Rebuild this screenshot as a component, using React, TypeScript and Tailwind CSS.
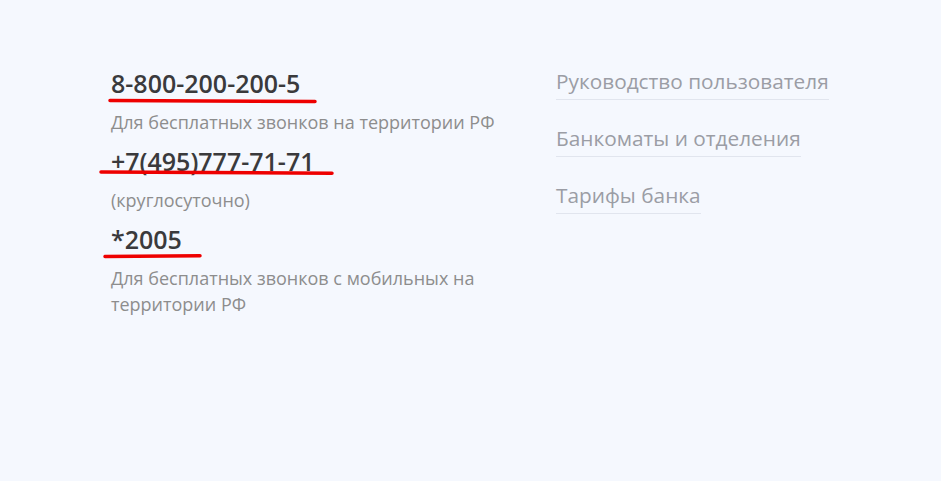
import React from "react";

function Stroke({ x1, y1, x2, y2, left, top, w, h }: { x1: number; y1: number; x2: number; y2: number; left: number; top: number; w: number; h: number }) {
  return (
    <svg className="absolute pointer-events-none" style={{ left, top }} width={w} height={h} viewBox={`0 0 ${w} ${h}`}>
      <line x1={x1} y1={y1} x2={x2} y2={y2} stroke="#ee0000" strokeWidth={3.5} strokeLinecap="round" />
    </svg>
  );
}

export default function App() {
  const font = { fontFamily: '"Open Sans", "Noto Sans", sans-serif' };
  return (
    <div className="w-[941px] h-[481px] bg-[#f5f8fe] overflow-hidden" style={font}>
      <div className="flex pt-[67px] pl-[111px]">
        <div className="w-[445px] flex flex-col">
          <div className="relative text-[25px] leading-[32px] font-semibold text-[#3a3a3c]">
            8-800-200-200-5
            <Stroke left={-4} top={28} w={216} h={12} x1={3} y1={5.5} x2={208} y2={6.5} />
          </div>
          <div className="mt-[10px] text-[18px] leading-[26px] text-[#8d8d8d]">
            Для бесплатных звонков на территории РФ
          </div>
          <div className="relative mt-[10px] text-[25px] leading-[32px] font-semibold text-[#3a3a3c]">
            +7(495)777-71-71
            <Stroke left={-13} top={22} w={240} h={12} x1={3} y1={5} x2={234} y2={6.2} />
          </div>
          <div className="mt-[10px] text-[18px] leading-[26px] text-[#8d8d8d]">(круглосуточно)</div>
          <div className="relative mt-[10px] text-[25px] leading-[32px] font-semibold text-[#3a3a3c]">
            *2005
            <Stroke left={-9} top={27} w={105} h={12} x1={3} y1={6.5} x2={98} y2={5.8} />
          </div>
          <div className="mt-[10px] w-[400px] text-[18px] leading-[26px] text-[#8d8d8d]">
            Для бесплатных звонков с мобильных на территории РФ
          </div>
        </div>
        <div className="flex flex-col items-start pt-[1px]">
          <div className="text-[20.8px] leading-[26px] text-[#9b9da5] pb-[5px] border-b border-[#e1e5ee]">
            Руководство пользователя
          </div>
          <div className="mt-[25px] text-[20.8px] leading-[26px] text-[#9b9da5] pb-[5px] border-b border-[#e1e5ee]">
            Банкоматы и отделения
          </div>
          <div className="mt-[25px] text-[20.8px] leading-[26px] text-[#9b9da5] pb-[5px] border-b border-[#e1e5ee]">
            Тарифы банка
          </div>
        </div>
      </div>
    </div>
  );
}
